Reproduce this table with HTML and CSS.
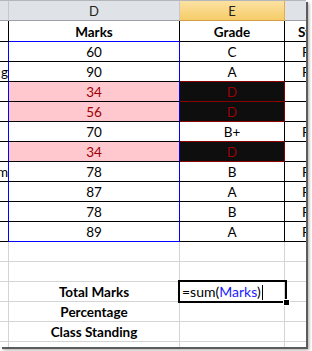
FILE: index.html
```html
<!DOCTYPE html>
<html>
<head>
<meta charset="utf-8">
<link rel="stylesheet" href="styles.css">
</head>
<body>
<div class="sheet">
  <div class="cell hdr"></div>
  <div class="cell hdr">D</div>
  <div class="cell hdr act">E</div>
  <div class="cell hdr f"></div>

  <div class="cell c tb top"></div>
  <div class="cell d tb top blb b">Marks</div>
  <div class="cell e tb top b">Grade</div>
  <div class="cell f tb top b"><span class="st">Status</span></div>

  <div class="cell c tb blr"></div>
  <div class="cell d tb blr">60</div>
  <div class="cell e tb">C</div>
  <div class="cell f tb"><span class="p">Pass</span></div>

  <div class="cell c tb blr txt"><span>g</span></div>
  <div class="cell d tb blr">90</div>
  <div class="cell e tb rdb">A</div>
  <div class="cell f tb"><span class="p">Pass</span></div>

  <div class="cell c tb blr"></div>
  <div class="cell d tb blr bad">34</div>
  <div class="cell e tb blk">D</div>
  <div class="cell f tb"></div>

  <div class="cell c tb blr"></div>
  <div class="cell d tb blr bad">56</div>
  <div class="cell e tb blk">D</div>
  <div class="cell f tb"></div>

  <div class="cell c tb blr"></div>
  <div class="cell d tb blr">70</div>
  <div class="cell e tb rdb">B+</div>
  <div class="cell f tb"><span class="p">Pass</span></div>

  <div class="cell c tb blr"></div>
  <div class="cell d tb blr bad">34</div>
  <div class="cell e tb blk">D</div>
  <div class="cell f tb"></div>

  <div class="cell c tb blr txt"><span>m</span></div>
  <div class="cell d tb blr">78</div>
  <div class="cell e tb">B</div>
  <div class="cell f tb"><span class="p">Pass</span></div>

  <div class="cell c tb blr"></div>
  <div class="cell d tb blr">87</div>
  <div class="cell e tb">A</div>
  <div class="cell f tb"><span class="p">Pass</span></div>

  <div class="cell c tb blr"></div>
  <div class="cell d tb blr">78</div>
  <div class="cell e tb">B</div>
  <div class="cell f tb"><span class="p">Pass</span></div>

  <div class="cell c tb blr"></div>
  <div class="cell d tb blr blb">89</div>
  <div class="cell e tb">A</div>
  <div class="cell f tb"><span class="p">Pass</span></div>

  <div class="cell c"></div>
  <div class="cell d"></div>
  <div class="cell e"></div>
  <div class="cell f"></div>

  <div class="cell c"></div>
  <div class="cell d"></div>
  <div class="cell e"></div>
  <div class="cell f"></div>

  <div class="cell c"></div>
  <div class="cell d b">Total Marks</div>
  <div class="cell e active">=sum(<span class="ref">Marks</span>)<span class="caret"></span><span class="sel"></span><span class="handle"></span></div>
  <div class="cell f"></div>

  <div class="cell c"></div>
  <div class="cell d b">Percentage</div>
  <div class="cell e"></div>
  <div class="cell f"></div>

  <div class="cell c"></div>
  <div class="cell d b">Class Standing</div>
  <div class="cell e"></div>
  <div class="cell f"></div>

  <div class="cell c last"></div>
  <div class="cell d last"></div>
  <div class="cell e last"></div>
  <div class="cell f last"></div>
</div>
</body>
</html>
```
FILE: styles.css
```css
* { box-sizing: border-box; }
html, body { margin: 0; padding: 0; background: #fff; }
body {
  width: 312px;
  height: 351px;
  overflow: hidden;
  font-family: Lato, "Liberation Sans", sans-serif;
  font-size: 13.5px;
  color: #000;
}
.sheet {
  display: grid;
  grid-template-columns: 9px 171px 105px 21px;
  grid-template-rows: 21px 21px repeat(15, 20px) 5px;
  width: 306px;
  height: 347px;
  background: #fff;
  box-shadow: 2px 2px 0 #5c5c5c, 3px 3px 3px rgba(0, 0, 0, 0.35);
  overflow: hidden;
}
.cell {
  border-right: 1px solid #d4d4d4;
  border-bottom: 1px solid #d4d4d4;
  line-height: 20px;
  white-space: nowrap;
  overflow: hidden;
  text-align: center;
}
.f { border-right: none; text-align: left; }
.last { border-bottom: none; }
.b { font-weight: bold; }

.hdr {
  background: #dfe3e8;
  border-top: 1px solid #b3b7bc;
  border-right-color: #c4c8cd;
  border-bottom-color: #9da2a8;
  color: #222;
  font-size: 13px;
  line-height: 17px;
  padding-top: 2px;
}
.hdr.act {
  background: linear-gradient(#fbe1a2, #f6cc68);
  border-right-color: #e2ad4e;
  border-bottom-color: #d49c45;
}

.tb { border-right-color: #000; border-bottom-color: #000; }
.f.tb { border-right: none; }
.top { padding-top: 1px; }
.blr { border-right-color: #0000ff; }
.blb { border-bottom-color: #0000ff; }
.rdb { border-bottom-color: #8b0000; }

.bad { background: #ffc7ce; color: #9c0006; }
.blk {
  background: #0e0e0e;
  color: #9c0006;
  border-right-color: #8b0000;
  border-bottom-color: #8b0000;
}

.txt { display: flex; justify-content: flex-end; }

.st { display: block; padding-left: 13px; }
.p { display: block; padding-left: 17px; color: #000; }

.active {
  position: relative;
  overflow: visible;
  text-align: left;
  padding-left: 2px;
  font-size: 14px;
}
.ref { color: #1a1aff; }
.caret {
  display: inline-block;
  width: 1px;
  height: 15px;
  margin-left: 1px;
  vertical-align: -3px;
  background: #000;
}
.sel {
  position: absolute;
  left: -2px;
  top: -2px;
  width: 109px;
  height: 23px;
  border: 2px solid #000;
}
.handle {
  position: absolute;
  left: 104px;
  top: 18px;
  width: 5px;
  height: 5px;
  background: #000;
  outline: 1px solid #fff;
}
```
